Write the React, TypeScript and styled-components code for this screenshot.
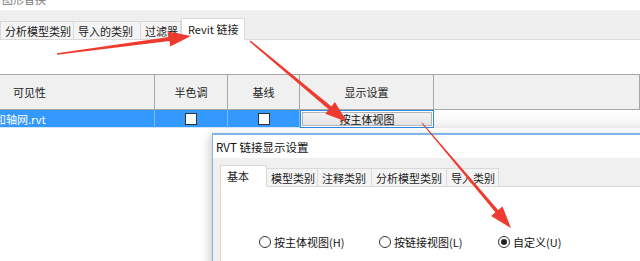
import React from 'react'
import styled, { createGlobalStyle } from 'styled-components'

const GlobalStyle = createGlobalStyle`
  html, body {
    margin: 0;
    padding: 0;
    background: #ffffff;
    overflow: hidden;
  }
  body {
    font-family: "Noto Sans CJK SC", "Noto Sans", sans-serif;
    font-size: 11px;
    color: #000;
  }
`

const Page = styled.div`
  position: relative;
  width: 640px;
  height: 261px;
  overflow: hidden;
  background: #fff;
`

const Caption = styled.div`
  height: 10px;
  overflow: hidden;
  color: #7a7a7a;
  font-size: 11px;
  line-height: 12px;
  padding-left: 2px;
  & > span {
    display: block;
    margin-top: -7px;
  }
`

const TabStrip = styled.div`
  display: flex;
  align-items: flex-end;
  height: 29px;
  background: #efefef;
  border-bottom: 1px solid #dadada;
`

const Tab = styled.div<{ $active?: boolean; $w: number }>`
  box-sizing: border-box;
  width: ${p => p.$w}px;
  height: ${p => (p.$active ? 22 : 19)}px;
  margin-bottom: -1px;
  display: flex;
  align-items: center;
  padding-left: ${p => (p.$active ? 6 : 4)}px;
  white-space: nowrap;
  background: ${p => (p.$active ? '#ffffff' : '#f4f4f4')};
  border: 1px solid #d9d9d9;
  border-bottom: ${p => (p.$active ? '1px solid #ffffff' : '1px solid #d9d9d9')};
  border-left: ${p => (p.$active ? '1px solid #d9d9d9' : 'none')};
  &:first-child {
    border-left: 1px solid #d9d9d9;
  }
  color: #1a1a1a;
  font-size: 11px;
  line-height: 14px;
`

const Gap = styled.div<{ $h: number }>`
  height: ${p => p.$h}px;
`

const Grid = styled.div`
  display: grid;
  grid-template-columns: 155px 73px 72px 134px 1fr;
`

const HeadCell = styled.div<{ $left?: boolean }>`
  box-sizing: border-box;
  height: 36px;
  background: #f0f0f0;
  border-top: 1px solid #a7a7a7;
  border-bottom: 1px solid #a7a7a7;
  border-right: 1px solid #a7a7a7;
  display: flex;
  align-items: center;
  justify-content: ${p => (p.$left ? 'flex-start' : 'center')};
  padding-left: ${p => (p.$left ? 13 : 0)}px;
  color: #222;
  &:last-child {
    border-right: none;
  }
`

const RowCell = styled.div<{ $left?: boolean }>`
  box-sizing: border-box;
  height: 18px;
  background: #3399ff;
  border-right: 1px solid #7fbaf5;
  border-bottom: 1px solid #d0e6fb;
  display: flex;
  align-items: center;
  justify-content: ${p => (p.$left ? 'flex-start' : 'center')};
  color: #ffffff;
  overflow: hidden;
  white-space: nowrap;
  & > span {
    margin-left: -5px;
  }
`

const Check = styled.div`
  box-sizing: border-box;
  width: 12px;
  height: 12px;
  background: #fff;
  border: 1px solid #333;
`

const ButtonCell = styled.div`
  box-sizing: border-box;
  height: 18px;
  border: 1px solid #2e88e0;
  padding: 1px;
  background: #fff;
`

const Button = styled.div`
  box-sizing: border-box;
  height: 100%;
  background: linear-gradient(#f2f2f2, #e3e3e3);
  border: 1px solid #b4b4b4;
  display: flex;
  align-items: center;
  justify-content: center;
  color: #111;
`

const BlankCell = styled.div`
  height: 18px;
  background: linear-gradient(#ffffff, #f6f6f6 70%, #eaeaea);
`

const Dialog = styled.div`
  position: absolute;
  left: 212px;
  top: 133px;
  width: 440px;
  height: 140px;
  box-sizing: border-box;
  border: 1px solid #80b4e6;
  border-top-width: 2px;
  background: #f0f0f0;
  box-shadow: -3px 2px 8px rgba(0, 0, 0, 0.18);
`

const DialogTitle = styled.div`
  height: 23px;
  background: #fff;
  display: flex;
  align-items: center;
  padding-left: 3px;
  color: #111;
  font-size: 11.5px;
`

const DialogBody = styled.div`
  padding: 7px 0 0 7px;
`

const InnerStrip = styled(TabStrip)`
  height: 21px;
  background: transparent;
  border-bottom: none;
`

const Panel = styled.div`
  height: 80px;
  background: #fff;
  border-left: 1px solid #d9d9d9;
  border-top: 1px solid #d9d9d9;
  display: flex;
  align-items: flex-start;
  padding: 47px 0 0 38px;
`

const RadioOption = styled.div<{ $w: number }>`
  display: flex;
  align-items: center;
  width: ${p => p.$w}px;
  gap: 3px;
  color: #111;
  white-space: nowrap;
`

const RadioDot = styled.div<{ $on?: boolean }>`
  box-sizing: border-box;
  width: 12px;
  height: 12px;
  border-radius: 50%;
  border: 1px solid #333;
  background: #fff;
  display: flex;
  align-items: center;
  justify-content: center;
  &::after {
    content: '';
    display: ${p => (p.$on ? 'block' : 'none')};
    width: 6px;
    height: 6px;
    border-radius: 50%;
    background: #222;
  }
`

const Overlay = styled.svg`
  position: absolute;
  left: 0;
  top: 0;
  pointer-events: none;
`

type Pt = [number, number]

const arrowPoints = (
  tail: Pt,
  tip: Pt,
  tw: number,
  sw: number,
  hl: number,
  hw: number
) => {
  const dx = tip[0] - tail[0]
  const dy = tip[1] - tail[1]
  const len = Math.hypot(dx, dy)
  const ux = dx / len
  const uy = dy / len
  const nx = -uy
  const ny = ux
  const bx = tip[0] - ux * hl
  const by = tip[1] - uy * hl
  const pts: Pt[] = [
    [tail[0] + (nx * tw) / 2, tail[1] + (ny * tw) / 2],
    [bx + (nx * sw) / 2, by + (ny * sw) / 2],
    [bx + (nx * hw) / 2, by + (ny * hw) / 2],
    tip,
    [bx - (nx * hw) / 2, by - (ny * hw) / 2],
    [bx - (nx * sw) / 2, by - (ny * sw) / 2],
    [tail[0] - (nx * tw) / 2, tail[1] - (ny * tw) / 2]
  ]
  return pts.map(p => p.map(v => v.toFixed(1)).join(',')).join(' ')
}

const arrows = [
  { tail: [57, 54] as Pt, tip: [191, 36] as Pt, tw: 1.5, sw: 4, hl: 22, hw: 15 },
  { tail: [250, 41] as Pt, tip: [347, 122] as Pt, tw: 1.5, sw: 4, hl: 22, hw: 15 },
  { tail: [422, 123] as Pt, tip: [511, 228] as Pt, tw: 1, sw: 3.5, hl: 22, hw: 15 }
]

const outerTabs = [
  { label: '分析模型类别', w: 74 },
  { label: '导入的类别', w: 67 },
  { label: '过滤器', w: 40 },
  { label: 'Revit 链接', w: 64, active: true }
]

const innerTabs = [
  { label: '基本', w: 47, active: true },
  { label: '模型类别', w: 51 },
  { label: '注释类别', w: 54 },
  { label: '分析模型类别', w: 75 },
  { label: '导入类别', w: 52 }
]

export default function App() {
  return (
    <Page>
      <GlobalStyle />
      <Caption>
        <span>图形替换</span>
      </Caption>
      <TabStrip>
        {outerTabs.map(t => (
          <Tab key={t.label} $w={t.w} $active={t.active}>
            {t.label}
          </Tab>
        ))}
      </TabStrip>
      <Gap $h={34} />
      <Grid>
        <HeadCell $left>可见性</HeadCell>
        <HeadCell>半色调</HeadCell>
        <HeadCell>基线</HeadCell>
        <HeadCell>显示设置</HeadCell>
        <HeadCell />
        <RowCell $left>
          <span>和轴网.rvt</span>
        </RowCell>
        <RowCell>
          <Check />
        </RowCell>
        <RowCell>
          <Check />
        </RowCell>
        <ButtonCell>
          <Button>按主体视图</Button>
        </ButtonCell>
        <BlankCell />
      </Grid>

      <Dialog>
        <DialogTitle>RVT 链接显示设置</DialogTitle>
        <DialogBody>
          <InnerStrip>
            {innerTabs.map(t => (
              <Tab key={t.label} $w={t.w} $active={t.active}>
                {t.label}
              </Tab>
            ))}
          </InnerStrip>
          <Panel>
            <RadioOption $w={120}>
              <RadioDot />
              按主体视图(H)
            </RadioOption>
            <RadioOption $w={119}>
              <RadioDot />
              按链接视图(L)
            </RadioOption>
            <RadioOption $w={100}>
              <RadioDot $on />
              自定义(U)
            </RadioOption>
          </Panel>
        </DialogBody>
      </Dialog>

      <Overlay width={640} height={261} viewBox="0 0 640 261">
        {arrows.map((a, i) => (
          <polygon
            key={i}
            points={arrowPoints(a.tail, a.tip, a.tw, a.sw, a.hl, a.hw)}
            fill="#ee3a2f"
          />
        ))}
      </Overlay>
    </Page>
  )
}
